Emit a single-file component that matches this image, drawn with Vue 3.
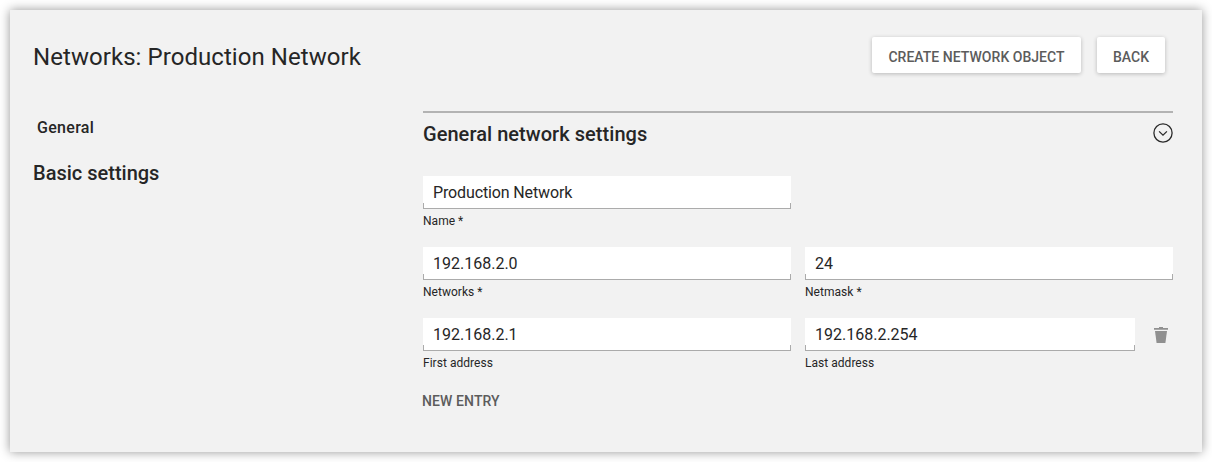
<script setup>
const rows = [
  [{ label: 'Name *', value: 'Production Network', prose: true }],
  [{ label: 'Networks *', value: '192.168.2.0' }, { label: 'Netmask *', value: '24' }],
  [{ label: 'First address', value: '192.168.2.1' }, { label: 'Last address', value: '192.168.2.254' }],
]
</script>

<template>
  <main class="page">
    <section class="card">
      <header class="head">
        <h1>Networks: Production Network</h1>
        <div class="actions">
          <button class="btn create">CREATE NETWORK OBJECT</button>
          <button class="btn back">BACK</button>
        </div>
      </header>
      <div class="body">
        <nav class="side">
          <a class="general">General</a>
          <a class="basic">Basic settings</a>
        </nav>
        <div class="settings">
          <div class="title">
            <h2>General network settings</h2>
            <svg class="toggle" width="20" height="20" viewBox="0 0 20 20" fill="none" stroke="#2a2a2a" stroke-width="1.3">
              <circle cx="10" cy="10" r="9.1" />
              <path d="M6.1 8.4l3.9 3.7 3.9-3.7" />
            </svg>
          </div>
          <div v-for="(row, i) in rows" :key="i" class="row" :class="{ removable: i === 2 }">
            <div v-for="f in row" :key="f.label" class="field">
              <div class="input" :class="{ prose: f.prose }">{{ f.value }}</div>
              <div class="label">{{ f.label }}</div>
            </div>
            <svg v-if="i === 2" class="trash" width="14" height="16" viewBox="0 0 14 16" fill="#909090">
              <path d="M0 1h5V0h4v1h5v1.8H0z" />
              <path d="M1 4h12l-1.6 12H2.6z" />
            </svg>
          </div>
          <button class="entry">NEW ENTRY</button>
        </div>
      </div>
    </section>
  </main>
</template>

<style>
body { background: #fff; }
</style>

<style scoped>
* { box-sizing: border-box; }
.page { height: 462px; padding: 10px; font-family: Roboto, sans-serif; color: #262626; overflow: hidden; }
.card { width: 1192px; height: 442px; background: #f2f2f2; box-shadow: 0 0 10px rgba(0,0,0,.42); }
.head { display: flex; justify-content: space-between; padding: 27px 37px 0 23px; height: 101px; }
h1 { margin: 0; font-size: 24px; line-height: 40px; font-weight: 400; letter-spacing: .06px; }
.actions { display: flex; gap: 16px; }
button { border: 0; padding: 0; font: 500 14px/36px Roboto, sans-serif; color: #5c5c5c; background: none; letter-spacing: .03px; }
.btn { height: 36px; line-height: 40px; background: #fff; box-shadow: 0 1px 4px rgba(0,0,0,.24); border-radius: 2px; }
.create { width: 209px; }
.back { width: 68px; }
.body { display: flex; }
.side { width: 413px; padding-left: 23px; display: flex; flex-direction: column; font-weight: 500; }
.general { font-size: 16px; line-height: 20px; padding: 7px 0 0 4px; letter-spacing: .3px; }
.basic { font-size: 20px; line-height: 24px; margin-top: 23px; }
.settings { width: 750px; border-top: 2px solid #b3b3b3; }
.title { display: flex; justify-content: space-between; align-items: center; height: 41px; margin-bottom: 22px; }
.toggle { margin-bottom: 1px; }
h2 { margin: 0; font-size: 20px; font-weight: 500; line-height: 24px; letter-spacing: .05px; }
.row { display: grid; grid-template-columns: 368px 368px; column-gap: 14px; height: 71px; }
.removable { grid-template-columns: 368px 330px 14px; }
.input { position: relative; height: 33px; padding-left: 10px; background: #fff; font-size: 16px; line-height: 33px; border-bottom: 1px solid #ababab; }
.input::after { content: ''; position: absolute; inset: auto 0 0 0; height: 5px; border: solid #ababab; border-width: 0 1px; }
.prose { letter-spacing: -.13px; }
.label { font-size: 12px; line-height: 14px; margin-top: 5px; letter-spacing: .03px; }
.trash { margin: 9px 0 0 5px; }
.entry { display: block; margin: 2px 0 0 -1px; line-height: 20px; letter-spacing: .1px; }
</style>
